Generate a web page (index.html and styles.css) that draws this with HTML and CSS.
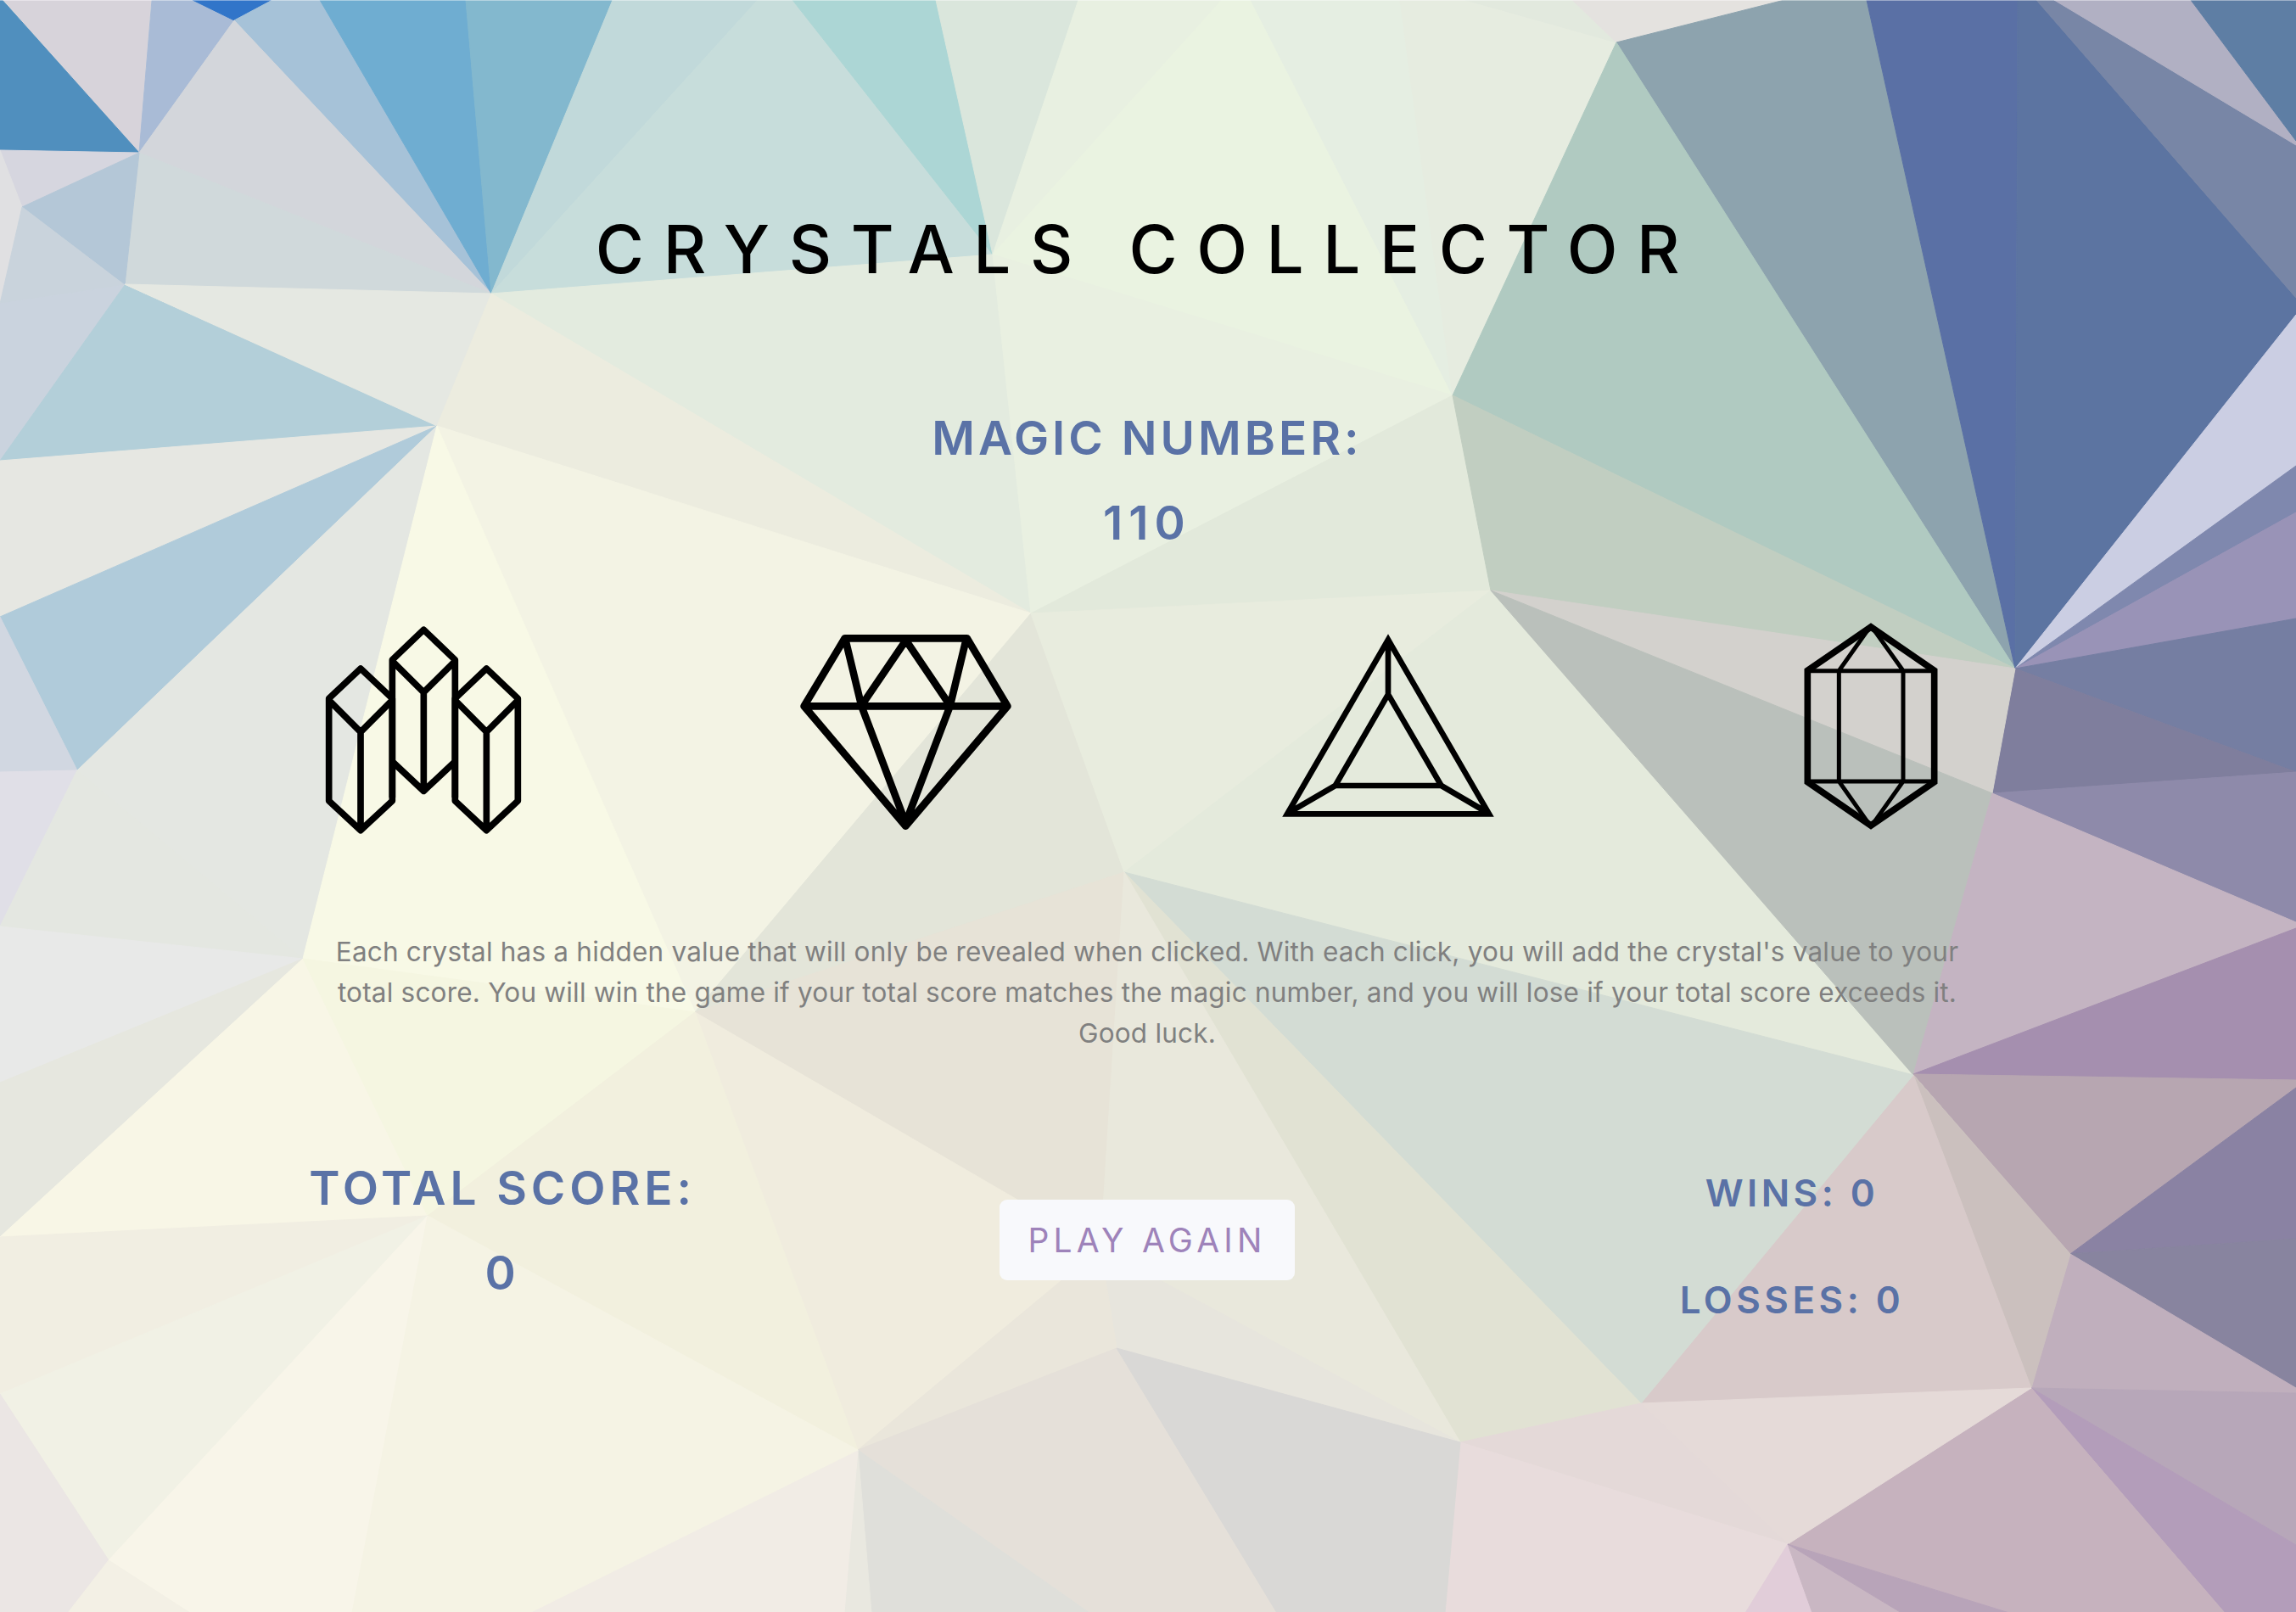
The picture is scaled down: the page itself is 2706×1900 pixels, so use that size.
FILE: index.html
```html
<!DOCTYPE html>
<html lang="en">
<head>
<meta charset="utf-8">
<title>Crystals Collector</title>
<link rel="stylesheet" href="styles.css">
</head>
<body>
<svg class="backdrop" viewBox="0 0 2706 1900" preserveAspectRatio="none" aria-hidden="true">
  <g transform="translate(0 1)">
  <!-- top left -->
  <polygon fill="#d7d3da" stroke="#d7d3da" points="4,-1 178,-1 164,179"/>
  <polygon fill="#508fbe" stroke="#508fbe" points="0,-4 164,179 0,176"/>
  <polygon fill="#a9bbd6" stroke="#a9bbd6" points="179,-1 227,-1 276,23 164,179"/>
  <polygon fill="#3175c9" stroke="#3175c9" points="227,-1 321,-1 276,23"/>
  <polygon fill="#a6c2d8" stroke="#a6c2d8" points="321,-1 377,-1 579,345 276,23"/>
  <polygon fill="#d3d6db" stroke="#d3d6db" points="276,23 579,345 164,179"/>
  <polygon fill="#d0d9db" stroke="#d0d9db" points="164,179 579,345 147,334"/>
  <polygon fill="#6fadd1" stroke="#6fadd1" points="377,-1 549,-1 579,345"/>
  <polygon fill="#83b8ce" stroke="#83b8ce" points="549,-1 722,-1 579,345"/>
  <polygon fill="#c1d9da" stroke="#c1d9da" points="722,-1 893,-1 579,345"/>
  <polygon fill="#c7dddb" stroke="#c7dddb" points="893,-1 934,-1 1170,299 579,345"/>
  <polygon fill="#d6d6df" stroke="#d6d6df" points="0,176 164,179 26,243"/>
  <polygon fill="#e0e0e2" stroke="#e0e0e2" points="0,176 26,243 0,357"/>
  <polygon fill="#b4c7d7" stroke="#b4c7d7" points="164,179 147,335 26,243"/>
  <polygon fill="#c9d3dc" stroke="#c9d3dc" points="26,243 147,335 0,357"/>
  <polygon fill="#cad3de" stroke="#cad3de" points="0,357 147,335 0,542"/>
  <polygon fill="#b3cfd9" stroke="#b3cfd9" points="147,335 515,501 0,542"/>
  <polygon fill="#e5e8e2" stroke="#e5e8e2" points="147,334 579,345 515,501"/>
  <polygon fill="#e6e7e2" stroke="#e6e7e2" points="0,542 515,501 0,726"/>
  <polygon fill="#b0cbda" stroke="#b0cbda" points="0,726 515,501 91,907"/>
  <polygon fill="#d1d7e1" stroke="#d1d7e1" points="0,726 91,907 0,909"/>
  <polygon fill="#e0dfe7" stroke="#e0dfe7" points="0,909 91,907 0,1091"/>
  <polygon fill="#e4e7e2" stroke="#e4e7e2" points="91,907 515,501 357,1129"/>
  <polygon fill="#e4e7e1" stroke="#e4e7e1" points="91,907 357,1129 0,1091"/>
  <!-- top centre -->
  <polygon fill="#acd6d5" stroke="#acd6d5" points="934,-1 1103,-1 1170,299"/>
  <polygon fill="#dae6dc" stroke="#dae6dc" points="1103,-1 1271,-1 1170,299"/>
  <polygon fill="#e8f0e1" stroke="#e8f0e1" points="1271,-1 1440,-1 1170,299"/>
  <polygon fill="#eaf3e1" stroke="#eaf3e1" points="1440,-1 1474,-1 1712,465 1170,299"/>
  <polygon fill="#e5eee2" stroke="#e5eee2" points="1474,-1 1650,-1 1712,465"/>
  <polygon fill="#e6ece0" stroke="#e6ece0" points="1650,-1 1727,-1 1905,49 1712,465"/>
  <polygon fill="#e2e9de" stroke="#e2e9de" points="1727,-1 1853,-1 1905,49"/>
  <polygon fill="#e4e2df" stroke="#e4e2df" points="1853,-1 2103,-1 1905,49"/>
  <polygon fill="#e3ebdf" stroke="#e3ebdf" points="579,345 1170,299 1215,722"/>
  <polygon fill="#e9f0e1" stroke="#e9f0e1" points="1170,299 1712,465 1215,722"/>
  <polygon fill="#e2e9db" stroke="#e2e9db" points="1712,465 1757,695 1215,722"/>
  <polygon fill="#ececdf" stroke="#ececdf" points="579,345 1215,722 515,501"/>
  <polygon fill="#f3f3e4" stroke="#f3f3e4" points="515,501 1215,722 819,1192"/>
  <polygon fill="#f8f9e6" stroke="#f8f9e6" points="515,501 819,1192 357,1129"/>
  <polygon fill="#e3e5d9" stroke="#e3e5d9" points="1215,722 1325,1027 819,1192"/>
  <polygon fill="#e8ecde" stroke="#e8ecde" points="1215,722 1757,695 1325,1027"/>
  <polygon fill="#e4eadc" stroke="#e4eadc" points="1757,695 2255,1266 1325,1027"/>
  <!-- top right -->
  <polygon fill="#8da3ae" stroke="#8da3ae" points="1905,49 2103,-1 2200,-1 2375,787"/>
  <polygon fill="#b0cac1" stroke="#b0cac1" points="1905,49 2375,787 1712,465"/>
  <polygon fill="#c1cec1" stroke="#c1cec1" points="1712,465 2375,787 1757,695"/>
  <polygon fill="#5a70a5" stroke="#5a70a5" points="2200,-1 2378,-1 2375,787"/>
  <polygon fill="#5c74a1" stroke="#5c74a1" points="2378,-1 2400,-1 2706,350 2706,370 2375,787"/>
  <polygon fill="#7886a6" stroke="#7886a6" points="2400,-1 2421,-1 2706,170 2706,350"/>
  <polygon fill="#b1b0c3" stroke="#b1b0c3" points="2421,-1 2582,-1 2706,165 2706,170"/>
  <polygon fill="#5e7ea4" stroke="#5e7ea4" points="2582,-1 2706,-1 2706,165"/>
  <polygon fill="#cbcee3" stroke="#cbcee3" points="2706,370 2706,548 2375,787"/>
  <polygon fill="#7f88ae" stroke="#7f88ae" points="2706,548 2706,603 2375,787"/>
  <polygon fill="#9993b7" stroke="#9993b7" points="2706,603 2706,728 2375,787"/>
  <polygon fill="#757ea2" stroke="#757ea2" points="2706,728 2706,909 2375,787"/>
  <polygon fill="#7f7e9d" stroke="#7f7e9d" points="2375,787 2706,909 2348,934"/>
  <polygon fill="#8e8aaa" stroke="#8e8aaa" points="2348,934 2706,909 2706,1086"/>
  <polygon fill="#d3d1cd" stroke="#d3d1cd" points="1757,695 2375,787 2348,934"/>
  <polygon fill="#bac0bb" stroke="#bac0bb" points="1757,695 2348,934 2255,1266"/>
  <!-- bottom right -->
  <polygon fill="#c4b4c2" stroke="#c4b4c2" points="2348,934 2706,1086 2706,1093 2255,1266"/>
  <polygon fill="#a58faf" stroke="#a58faf" points="2706,1093 2706,1272 2255,1265"/>
  <polygon fill="#b7a6b1" stroke="#b7a6b1" points="2255,1265 2706,1272 2706,1281 2440,1477"/>
  <polygon fill="#8a82a3" stroke="#8a82a3" points="2440,1477 2706,1281 2706,1459"/>
  <polygon fill="#88849f" stroke="#88849f" points="2440,1477 2706,1459 2706,1635"/>
  <polygon fill="#c0afbd" stroke="#c0afbd" points="2440,1477 2706,1635 2706,1641 2394,1635"/>
  <polygon fill="#cbc0be" stroke="#cbc0be" points="2255,1266 2440,1477 2394,1635"/>
  <polygon fill="#d8caca" stroke="#d8caca" points="2255,1266 2394,1635 1934,1653"/>
  <polygon fill="#d3dcd4" stroke="#d3dcd4" points="1325,1027 2255,1266 1934,1653"/>
  <polygon fill="#e1e2d3" stroke="#e1e2d3" points="1325,1027 1934,1653 1721,1699"/>
  <polygon fill="#b7a7b9" stroke="#b7a7b9" points="2394,1635 2706,1641 2706,1820"/>
  <polygon fill="#b39dba" stroke="#b39dba" points="2394,1635 2706,1820 2706,1900 2622,1900"/>
  <polygon fill="#c6b2be" stroke="#c6b2be" points="2394,1635 2622,1900 2368,1900 2107,1819"/>
  <polygon fill="#e5dad8" stroke="#e5dad8" points="1934,1653 2394,1635 2107,1819"/>
  <polygon fill="#e4d9d8" stroke="#e4d9d8" points="1721,1699 1934,1653 2107,1819"/>
  <polygon fill="#e8dcdc" stroke="#e8dcdc" points="1721,1699 2107,1819 2057,1900 1703,1900"/>
  <polygon fill="#e1cdd9" stroke="#e1cdd9" points="2107,1819 2136,1900 2057,1900"/>
  <polygon fill="#c9b7c3" stroke="#c9b7c3" points="2107,1819 2241,1900 2136,1900"/>
  <polygon fill="#b8a4b9" stroke="#b8a4b9" points="2107,1819 2368,1900 2241,1900"/>
  <!-- bottom centre -->
  <polygon fill="#e7e3d7" stroke="#e7e3d7" points="819,1192 1325,1027 1297,1470"/>
  <polygon fill="#e9e8dc" stroke="#e9e8dc" points="1325,1027 1721,1699 1297,1470"/>
  <polygon fill="#e7e5dd" stroke="#e7e5dd" points="1297,1470 1721,1699 1316,1588"/>
  <polygon fill="#f0ecde" stroke="#f0ecde" points="819,1192 1297,1470 1011,1708"/>
  <polygon fill="#eae6db" stroke="#eae6db" points="1297,1470 1316,1588 1011,1708"/>
  <polygon fill="#e5e0d9" stroke="#e5e0d9" points="1011,1708 1316,1588 1505,1900 1284,1900"/>
  <polygon fill="#d9d8d6" stroke="#d9d8d6" points="1316,1588 1721,1699 1703,1900 1505,1900"/>
  <polygon fill="#dfdfda" stroke="#dfdfda" points="1011,1708 1284,1900 1027,1900"/>
  <polygon fill="#e9e8e0" stroke="#e9e8e0" points="1011,1708 1027,1900 995,1900"/>
  <polygon fill="#f1ece5" stroke="#f1ece5" points="1011,1708 995,1900 624,1900"/>
  <!-- bottom left -->
  <polygon fill="#e8e9e8" stroke="#e8e9e8" points="0,1091 357,1129 0,1275"/>
  <polygon fill="#e6e7df" stroke="#e6e7df" points="0,1275 357,1129 0,1457"/>
  <polygon fill="#f8f6e6" stroke="#f8f6e6" points="357,1129 504,1432 0,1457"/>
  <polygon fill="#f5f6e1" stroke="#f5f6e1" points="357,1129 819,1192 504,1432"/>
  <polygon fill="#f2f0de" stroke="#f2f0de" points="819,1192 1011,1708 504,1432"/>
  <polygon fill="#f1eee2" stroke="#f1eee2" points="0,1457 504,1432 0,1642"/>
  <polygon fill="#f1f1e5" stroke="#f1f1e5" points="0,1642 504,1432 128,1838"/>
  <polygon fill="#f8f5e9" stroke="#f8f5e9" points="504,1432 415,1900 224,1900 128,1838"/>
  <polygon fill="#f5f3e4" stroke="#f5f3e4" points="504,1432 1011,1708 624,1900 415,1900"/>
  <polygon fill="#ebe6e4" stroke="#ebe6e4" points="0,1642 128,1838 80,1900 0,1900"/>
  <polygon fill="#f3f0e5" stroke="#f3f0e5" points="128,1838 224,1900 80,1900"/>
  </g>
  <rect class="edge" width="2706" height="1"/>
</svg>

<main class="game">
  <h1 class="title">Crystals Collector</h1>

  <section class="magic">
    <h2 class="label">Magic Number:</h2>
    <p class="label value">110</p>
  </section>

  <section class="crystals">
    <svg class="crystal" viewBox="-9 0 840 840" stroke-width="23" stroke-linejoin="round">
      <path d="M307 660V173L418 67L529 173V660M307 178L418 288L529 178M418 288V637M307 533L418 637L529 533"/>
      <path d="M307 310L195 204L83 310V672L195 776L307 672ZM83 316L195 428L307 316M195 428V770"/>
      <path d="M529 310L640 204L751 310V672L640 776L529 672ZM529 316L640 428L751 316M640 428V770"/>
    </svg>
    <svg class="crystal" viewBox="-9 0 840 840" stroke-width="26" stroke-linejoin="round">
      <path d="M197 97H629L772 337L412 761L53 337ZM53 337H772M200 105L256 337L412 750L569 337L625 105M258 332L413 104L567 332"/>
    </svg>
    <svg class="crystal" viewBox="-9 0 840 840" stroke-width="20">
      <path d="M408 102L765 718H51ZM408 102V295M408 295L596 618H221ZM221 618L56 714M596 618L760 714"/>
    </svg>
    <svg class="crystal" viewBox="-9 0 840 840">
      <path stroke-width="23" d="M405 57L629 211V605L405 759L181 605V211Z"/>
      <path stroke-width="15" d="M181 212H629M181 603H629M405 52L292 212V603L405 763M405 52L519 212V603L405 763"/>
    </svg>
  </section>

  <p class="rules">Each crystal has a hidden value that will only be revealed when clicked. With each click, you will add the crystal's value to your total score. You will win the game if your total score matches the magic number, and you will lose if your total score exceeds it. Good luck.</p>

  <section class="board">
    <div class="score">
      <h2 class="label">Total Score:</h2>
      <p class="label">0</p>
    </div>
    <button class="play" type="button">Play Again</button>
    <div class="tally">
      <p class="count">Wins: 0</p>
      <p class="count">Losses: 0</p>
    </div>
  </section>
</main>
</body>
</html>
```
FILE: styles.css
```css
* {
  box-sizing: border-box;
}

body {
  margin: 0;
  height: 1900px;
  overflow: hidden;
  background: #eef0e2;
  font-family: Inter, "Liberation Sans", sans-serif;
}

h1, h2, p {
  margin: 0;
}

.backdrop {
  position: absolute;
  top: 0;
  left: 0;
  z-index: -1;
  width: 100%;
  height: 1900px;
}

.edge {
  fill: #fff;
  fill-opacity: 0.4;
}

.game {
  width: 2280px;
  margin-left: 212px;
  padding-top: 246px;
  text-align: center;
  text-transform: uppercase;
}

.title {
  font-size: 78px;
  font-weight: 540;
  line-height: 96px;
  letter-spacing: 22.6px;
  color: #000;
}

.magic {
  margin-top: 141px;
}

.label {
  font-size: 55px;
  font-weight: 560;
  line-height: 66px;
  letter-spacing: 4px;
  color: #5a72a6;
}

.label + .label {
  margin-top: 34px;
}

.value {
  letter-spacing: 7px;
}

.crystals {
  display: grid;
  grid-template-columns: repeat(4, 1fr);
  justify-items: center;
  margin-top: 71px;
}

.crystal {
  width: 280px;
  height: 280px;
  fill: none;
  stroke: #000;
}

.rules {
  margin-top: 98px;
  padding: 0 166px;
  font-size: 31.5px;
  font-weight: 440;
  line-height: 48.2px;
  letter-spacing: 0.2px;
  color: #808080;
  text-transform: none;
}

.board {
  display: grid;
  grid-template-columns: repeat(3, 1fr);
  justify-items: center;
  align-items: start;
  margin-top: 124px;
}

.score .label {
  letter-spacing: 4.9px;
}

.play {
  width: 348px;
  height: 95px;
  margin-top: 47px;
  padding: 0;
  border: 0;
  border-radius: 9px;
  background: #f8f9fc;
  color: #9e83ba;
  font: 430 39px/95px Inter, "Liberation Sans", sans-serif;
  letter-spacing: 5.2px;
  text-transform: uppercase;
}

.tally {
  margin-top: 13px;
}

.count {
  font-size: 44px;
  font-weight: 620;
  line-height: 53px;
  letter-spacing: 4.5px;
  color: #5a72a6;
}

.count + .count {
  margin-top: 73px;
}
```
